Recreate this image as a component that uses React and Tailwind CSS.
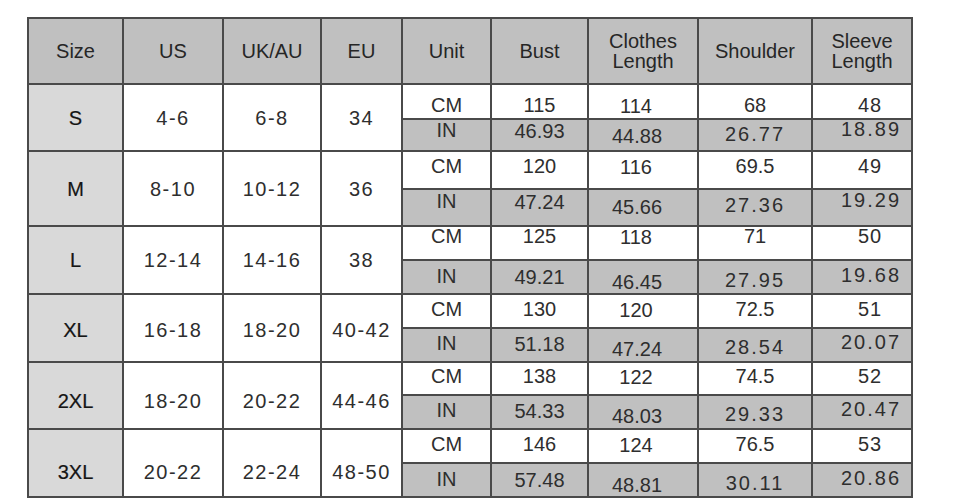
import React from "react";

const rows = [
  { size: "S", us: "4-6", uk: "6-8", eu: "34", left: "", cm: "pt-[7px]", inn: "pb-[11px]",
    c: ["115", "114", "68", "48"], i: ["46.93", "44.88", "26.77", "18.89"] },
  { size: "M", us: "8-10", uk: "10-12", eu: "36", left: "", cm: "pb-[8px]", inn: "pb-[13px]",
    c: ["120", "116", "69.5", "49"], i: ["47.24", "45.66", "27.36", "19.29"] },
  { size: "L", us: "12-14", uk: "14-16", eu: "38", left: "", cm: "pb-[14px]", inn: "pb-[2px]",
    c: ["125", "118", "71", "50"], i: ["49.21", "46.45", "27.95", "19.68"] },
  { size: "XL", us: "16-18", uk: "18-20", eu: "40-42", left: "pt-[4px]", cm: "pb-[4px]", inn: "pb-[5px]",
    c: ["130", "120", "72.5", "51"], i: ["51.18", "47.24", "28.54", "20.07"] },
  { size: "2XL", us: "18-20", uk: "20-22", eu: "44-46", left: "pt-[10px]", cm: "pb-[5px]", inn: "pb-[4px]",
    c: ["138", "122", "74.5", "52"], i: ["54.33", "48.03", "29.33", "20.47"] },
  { size: "3XL", us: "20-22", uk: "22-24", eu: "48-50", left: "pt-[18px]", cm: "pb-[4px]", inn: "pb-[2px]",
    c: ["146", "124", "76.5", "53"], i: ["57.48", "48.81", "30.11", "20.86"] },
];

const cmCol = [
  "",
  "translate-x-[-7px] translate-y-[1px]",
  "",
  "translate-x-[8px] tracking-[1px]",
];
const inCol = [
  "translate-y-[1px]",
  "translate-x-[-6px] translate-y-[6px]",
  "translate-y-[4px] tracking-[2px]",
  "translate-x-[9px] translate-y-[-1px] tracking-[2px]",
];

const base = "flex items-center justify-center text-[20px] leading-none text-[#2e2e2e]";

export default function App() {
  return (
    <div className="w-[969px] h-[503px] bg-white pt-[17px] pl-[27px]" style={{ fontFamily: '"Liberation Sans", Arial, sans-serif' }}>
      <div className="grid w-[886px] grid-cols-[93px_98px_96px_79px_87px_95px_108px_112px_98px] grid-rows-[64px_33px_30px_36px_35px_32px_32px_32px_32px_31px_32px_32px_32px] gap-[2px] p-[2px] bg-[#4a4a4a]">
        {["Size", "US", "UK/AU", "EU", "Unit", "Bust"].map((h) => (
          <div key={h} className={`${base} bg-[#c0c0c0] text-[#262626]`}>{h}</div>
        ))}
        <div className={`${base} flex-col bg-[#c0c0c0] text-[#262626] leading-[24px]`}>
          <span>Clothes</span>
          <span>Length</span>
        </div>
        <div className={`${base} bg-[#c0c0c0] text-[#262626]`}>Shoulder</div>
        <div className={`${base} flex-col bg-[#c0c0c0] text-[#262626] leading-[24px]`}>
          <span>Sleeve</span>
          <span>Length</span>
        </div>

        {rows.map((r) => (
          <React.Fragment key={r.size}>
            <div className={`${base} row-span-2 bg-[#d9d9d9] text-[#151515] [-webkit-text-stroke:0.2px_#151515] ${r.left}`}>{r.size}</div>
            <div className={`${base} row-span-2 bg-white tracking-[1.5px] ${r.left}`}>{r.us}</div>
            <div className={`${base} row-span-2 bg-white tracking-[1.5px] ${r.left}`}>{r.uk}</div>
            <div className={`${base} row-span-2 bg-white tracking-[1.5px] ${r.left}`}>{r.eu}</div>

            <div className={`${base} bg-white ${r.cm}`}>CM</div>
            {r.c.map((v, k) => (
              <div key={"c" + k} className={`${base} bg-white ${r.cm}`}>
                <span className={cmCol[k]}>{v}</span>
              </div>
            ))}

            <div className={`${base} bg-[#c0c0c0] ${r.inn}`}>IN</div>
            {r.i.map((v, k) => (
              <div key={"i" + k} className={`${base} bg-[#c0c0c0] ${r.inn}`}>
                <span className={inCol[k]}>{v}</span>
              </div>
            ))}
          </React.Fragment>
        ))}
      </div>
    </div>
  );
}
